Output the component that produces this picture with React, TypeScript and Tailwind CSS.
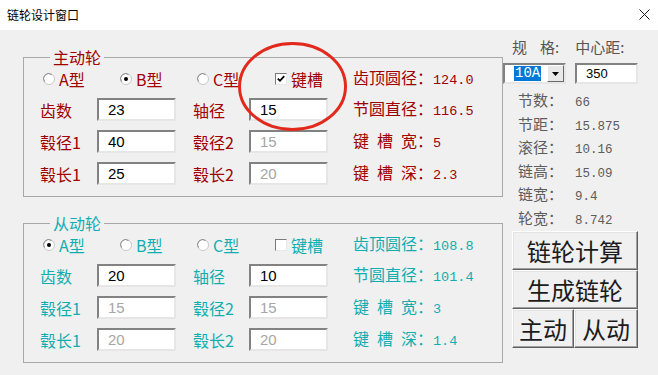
import * as React from 'react';

const CJK = "font-['Noto_Sans_CJK_SC','Noto_Sans',sans-serif]";
const MONO = "font-['Liberation_Mono','DejaVu_Sans_Mono',monospace]";

type Tone = 'red' | 'cyan';

const toneText: Record<Tone, string> = {
  red: 'text-[#a00000]',
  cyan: 'text-[#10aeb0]',
};

/** Windows-style radio */
function Radio({ checked }: { checked?: boolean }) {
  return (
    <svg width="12" height="12" viewBox="0 0 12 12" className="shrink-0">
      <circle cx="6" cy="6" r="5.5" fill="#ffffff" stroke="#c8c8c8" />
      <path d="M1.6 8.6 A5 5 0 0 1 8.6 1.6" fill="none" stroke="#8a8a8a" strokeWidth="1" />
      {checked && <circle cx="6" cy="6" r="2" fill="#000" />}
    </svg>
  );
}

function Check({ checked }: { checked?: boolean }) {
  return (
    <div className="w-[12px] h-[12px] shrink-0 bg-white border border-t-[#7a7a7a] border-l-[#7a7a7a] border-b-[#e8e8e8] border-r-[#e8e8e8] flex items-center justify-center">
      {checked && (
        <svg width="8" height="8" viewBox="0 0 8 8">
          <path d="M0.8 3.6 L3 5.8 L7.2 1.2" fill="none" stroke="#000" strokeWidth="1.8" />
        </svg>
      )}
    </div>
  );
}

function Field({ value, disabled }: { value: string; disabled?: boolean }) {
  return (
    <div
      className={
        "w-[79px] h-[23px] bg-white border-2 border-t-[#828282] border-l-[#828282] border-b-[#e6e6e6] border-r-[#e6e6e6] flex items-center pl-[9px] text-[15px] leading-none font-['Liberation_Sans',Arial,sans-serif] " +
        (disabled ? 'text-[#a6a6a6]' : 'text-black')
      }
    >
      {value}
    </div>
  );
}

function Spaced({ chars }: { chars: string[] }) {
  return (
    <span className="inline-flex w-[64px] justify-between">
      {chars.map((c) => (
        <span key={c}>{c}</span>
      ))}
    </span>
  );
}

function Result({ label, value }: { label: React.ReactNode; value: string }) {
  return (
    <div className="flex items-center h-full">
      <div className="flex items-baseline leading-[20px] whitespace-nowrap">
        <span>{label}</span>
        <span className="w-[16px]">：</span>
        <span className={MONO + ' text-[13.5px]'}>{value}</span>
      </div>
    </div>
  );
}

interface GroupProps {
  title: string;
  tone: Tone;
  radio: 'A' | 'B' | 'C';
  keyed: boolean;
  fields: { label: string; value: string; disabled?: boolean }[];
  results: { label: React.ReactNode; value: string }[];
  className?: string;
}

function WheelGroup({ title, tone, radio, keyed, fields, results, className }: GroupProps) {
  const t = toneText[tone];
  return (
    <fieldset className={'border border-[#a8a8a8] w-[480px] pl-[16px] ' + (className ?? '')}>
      <legend className={'ml-[10px] px-[3px] text-[16px] leading-[18px] ' + t}>{title}</legend>

      {/* radio row */}
      <div className={'flex items-center h-[20px] mt-[3px] text-[16px] leading-[18px] ' + t}>
        {(['A', 'B', 'C'] as const).map((k, i) => (
          <div key={k} className={'flex items-center gap-[4px] ' + (i === 0 ? 'ml-[3px] w-[77px]' : i === 1 ? 'w-[77px]' : 'w-[78px]')}>
            <Radio checked={radio === k} />
            <span>{k}型</span>
          </div>
        ))}
        <div className="flex items-center gap-[4px] w-[78px]">
          <Check checked={keyed} />
          <span>键槽</span>
        </div>
        <Result label={results[0].label} value={results[0].value} />
      </div>

      {/* field rows */}
      <div className={'flex flex-col gap-[9px] mt-[9px] mb-[11px] text-[16px] leading-[20px] ' + t}>
        {[0, 1, 2].map((r) => (
          <div key={r} className="flex items-center h-[23px]">
            <span className="w-[57px]">{fields[r * 2].label}</span>
            <Field value={fields[r * 2].value} disabled={fields[r * 2].disabled} />
            <span className="w-[56px] ml-[17px]">{fields[r * 2 + 1].label}</span>
            <Field value={fields[r * 2 + 1].value} disabled={fields[r * 2 + 1].disabled} />
            <div className="ml-[25px] h-full">
              <Result label={results[r + 1].label} value={results[r + 1].value} />
            </div>
          </div>
        ))}
      </div>
    </fieldset>
  );
}

function Btn({ children, className }: { children: React.ReactNode; className?: string }) {
  return (
    <div
      className={
        'h-[39px] flex items-center justify-center bg-[#f0f0f0] border border-t-[#ffffff] border-l-[#ffffff] border-b-[#5f5f5f] border-r-[#5f5f5f] shadow-[inset_-1px_-1px_0_#a0a0a0,inset_1px_1px_0_#e3e3e3] text-[24px] leading-none text-[#1c1c1c] ' +
        (className ?? '')
      }
    >
      {children}
    </div>
  );
}

const specs = [
  ['节数', '66'],
  ['节距', '15.875'],
  ['滚径', '10.16'],
  ['链高', '15.09'],
  ['链宽', '9.4'],
  ['轮宽', '8.742'],
];

export default function App() {
  return (
    <div className={'relative w-[658px] h-[375px] bg-[#f0f0f0] overflow-hidden ' + CJK}>
      {/* Title bar */}
      <div className="h-[30px] bg-white flex items-center justify-between pl-[7px] pr-[8px]">
        <span className="text-[12px] text-black">链轮设计窗口</span>
        <svg width="11" height="11" viewBox="0 0 11 11" className="mb-[2px]">
          <path d="M0.5 0.5 L10.5 10.5 M10.5 0.5 L0.5 10.5" stroke="#1a1a1a" strokeWidth="1" />
        </svg>
      </div>

      <div className="flex">
        {/* Left: groups */}
        <div className="ml-[23px] flex flex-col pt-[18px]">
          <WheelGroup
            title="主动轮"
            tone="red"
            radio="B"
            keyed
            fields={[
              { label: '齿数', value: '23' },
              { label: '轴径', value: '15' },
              { label: '毂径1', value: '40' },
              { label: '毂径2', value: '15', disabled: true },
              { label: '毂长1', value: '25' },
              { label: '毂长2', value: '20', disabled: true },
            ]}
            results={[
              { label: '齿顶圆径', value: '124.0' },
              { label: '节圆直径', value: '116.5' },
              { label: <Spaced chars={['键', '槽', '宽']} />, value: '5' },
              { label: <Spaced chars={['键', '槽', '深']} />, value: '2.3' },
            ]}
          />
          <WheelGroup
            className="mt-[17px]"
            title="从动轮"
            tone="cyan"
            radio="A"
            keyed={false}
            fields={[
              { label: '齿数', value: '20' },
              { label: '轴径', value: '10' },
              { label: '毂径1', value: '15', disabled: true },
              { label: '毂径2', value: '15', disabled: true },
              { label: '毂长1', value: '20', disabled: true },
              { label: '毂长2', value: '20', disabled: true },
            ]}
            results={[
              { label: '齿顶圆径', value: '108.8' },
              { label: '节圆直径', value: '101.4' },
              { label: <Spaced chars={['键', '槽', '宽']} />, value: '3' },
              { label: <Spaced chars={['键', '槽', '深']} />, value: '1.4' },
            ]}
          />
        </div>

        {/* Right: spec panel */}
        <div className="w-[136px] flex flex-col pt-[7px]">
          <div className="h-[20px] flex items-center text-[15px] leading-[20px] text-[#555555] pl-[9px] whitespace-nowrap">
            <span>规</span>
            <span className="ml-[13px]">格:</span>
            <span className="ml-[16px]">中心距:</span>
          </div>
          <div className="flex items-center mt-[6px] h-[21px]">
            <div className="w-[63px] h-[21px] bg-white border-2 border-t-[#828282] border-l-[#828282] border-b-[#e6e6e6] border-r-[#e6e6e6] flex items-center justify-between pl-[9px]">
              <span className={MONO + ' text-[14px] leading-[15px] bg-[#0078d7] text-white px-[1px]'}>10A</span>
              <div className="w-[17px] h-[17px] bg-[#e8e8e8] border border-t-[#ffffff] border-l-[#ffffff] border-b-[#6a6a6a] border-r-[#6a6a6a] flex items-center justify-center">
                <svg width="7" height="4" viewBox="0 0 7 4">
                  <path d="M0 0 L7 0 L3.5 4 Z" fill="#000" />
                </svg>
              </div>
            </div>
            <div className="ml-[9px] w-[63px] h-[21px] bg-white border-2 border-t-[#828282] border-l-[#828282] border-b-[#e6e6e6] border-r-[#e6e6e6] flex items-center pl-[9px] text-[13px] leading-none text-black font-['Liberation_Sans',Arial,sans-serif]">
              350
            </div>
          </div>
          <div className="flex flex-col mt-[6px]">
            {specs.map(([k, v]) => (
              <div key={k} className="h-[23.5px] flex items-center pl-[15px] text-[#5c5c5c]">
                <div className="flex items-baseline leading-[20px]">
                  <span className="w-[57px] text-[15px]">{k}：</span>
                  <span className={MONO + ' text-[12.5px]'}>{v}</span>
                </div>
              </div>
            ))}
          </div>
          <div className="ml-[9px] w-[126px] flex flex-col">
            <Btn>链轮计算</Btn>
            <Btn>生成链轮</Btn>
            <div className="flex">
              <Btn className="w-[62px]">主动</Btn>
              <Btn className="w-[64px]">从动</Btn>
            </div>
          </div>
        </div>
      </div>

      {/* red annotation ellipse */}
      <svg className="absolute left-0 top-0 pointer-events-none" width="658" height="375">
        <ellipse cx="292.5" cy="86.5" rx="53" ry="43" fill="none" stroke="#e2291c" strokeWidth="3" />
      </svg>
    </div>
  );
}
